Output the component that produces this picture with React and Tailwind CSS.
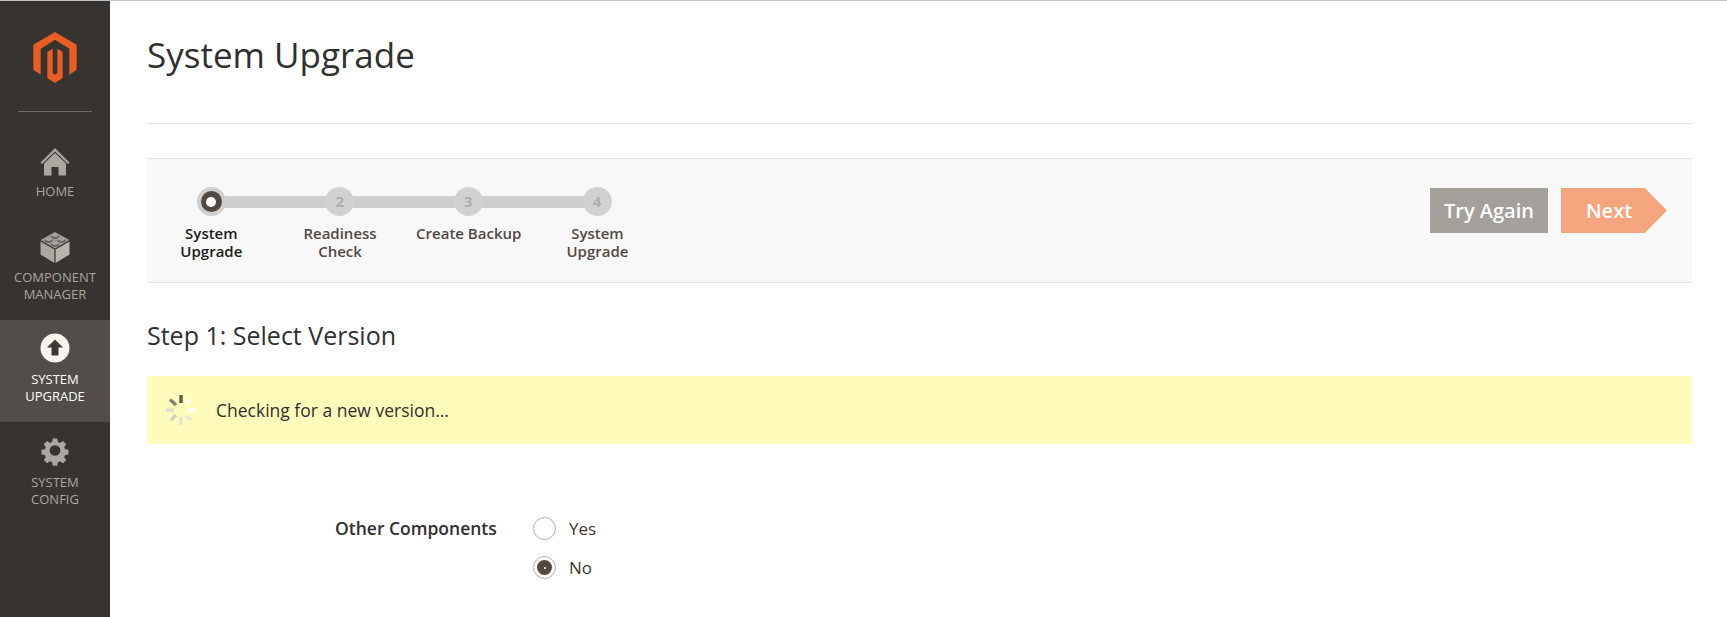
import React from 'react';

const HomeIcon = () => (
  <svg width="40" height="40" viewBox="0 0 40 40" fill="#aaa6a0">
    <path d="M20 6 L34.5 20.5 L33 22 L20 9.5 L7 22 L5.5 20.5 Z" />
    <path d="M20 11 L31 21.5 V33.5 H23.5 V25 H16.5 V33.5 H9 V21.5 Z" />
  </svg>
);

const Stud = ({ cx, cy }) => (
  <>
    <ellipse cx={cx} cy={cy + 1} rx="4" ry="2.2" fill="#66625d" />
    <ellipse cx={cx} cy={cy - 0.4} rx="3.6" ry="1.8" fill="#a5a19b" />
  </>
);

const BrickIcon = () => (
  <svg width="40" height="40" viewBox="0 0 40 40">
    <path d="M20 6 L34.5 14 L20 22.5 L5.5 14 Z" fill="#9a9690" />
    <path d="M5.5 15.5 L19.4 23.5 V37 L5.5 28.5 Z" fill="#aaa6a0" />
    <path d="M34.5 15.5 L20.6 23.5 V37 L34.5 28.5 Z" fill="#b8b5af" />
    <Stud cx={20} cy={9.5} />
    <Stud cx={13.5} cy={13.5} />
    <Stud cx={26.5} cy={13.5} />
    <Stud cx={20} cy={17.5} />
  </svg>
);

const UpgradeIcon = () => (
  <svg width="40" height="40" viewBox="0 0 40 40">
    <circle cx="20" cy="19" r="14.5" fill="#f8f5ee" />
    <path d="M20 10.5 L28 18.5 H23.5 V26.5 H16.5 V18.5 H12 Z" fill="#3d3835" />
  </svg>
);

const GearIcon = () => (
  <svg width="40" height="40" viewBox="0 0 40 40">
    <path
      fill="#aaa6a0"
      fillRule="evenodd"
      d="M17.2 5.5 h5.6 l.7 4.2 l2.7 1.1 l3.5-2.5 l4 4 l-2.5 3.5 l1.1 2.7 l4.2.7 v5.6 l-4.2.7 l-1.1 2.7 l2.5 3.5 l-4 4 l-3.5-2.5 l-2.7 1.1 l-.7 4.2 h-5.6 l-.7-4.2 l-2.7-1.1 l-3.5 2.5 l-4-4 l2.5-3.5 l-1.1-2.7 l-4.2-.7 v-5.6 l4.2-.7 l1.1-2.7 l-2.5-3.5 l4-4 l3.5 2.5 l2.7-1.1 Z M20 13.5 a6.5 6.5 0 1 0 .01 0 Z"
      transform="translate(3.6 3.1) scale(.82)"
    />
  </svg>
);

const Spinner = () => (
  <svg width="40" height="40" viewBox="0 0 40 40" strokeWidth="3.4">
    <line x1="21" y1="5" x2="21" y2="13" stroke="#5f5954" />
    <line x1="31" y1="9.5" x2="26.5" y2="14" stroke="#fffef4" />
    <line x1="36" y1="20" x2="28" y2="20" stroke="#fffef4" />
    <line x1="31" y1="30" x2="26" y2="25.5" stroke="#e9e7d8" />
    <line x1="21" y1="35" x2="21" y2="27" stroke="#e6e4d8" />
    <line x1="11" y1="30" x2="16" y2="25" stroke="#d2d0c5" />
    <line x1="6" y1="20" x2="14" y2="20" stroke="#e1dfd3" />
    <line x1="10" y1="9.5" x2="16" y2="15" stroke="#85807a" />
  </svg>
);

const Logo = () => (
  <svg width="50" height="60" viewBox="0 0 150 180" fill="#eb5e23" className="block">
    <path d="M75 12 L140 50 V125 L118 140 V62 L75 35 L32 62 V140 L10 125 V50 Z" />
    <path d="M52 72 L68 62 V135 L75 140 L82 135 V62 L98 72 V150 L75 165 L52 150 Z" />
  </svg>
);

const navItems = [
  { label: ['HOME'], icon: <HomeIcon />, height: 'h-[84px]', labelGap: 'mt-[1px]' },
  { label: ['COMPONENT', 'MANAGER'], icon: <BrickIcon />, height: 'h-[103px]', labelGap: 'mt-[3px]' },
  { label: ['SYSTEM', 'UPGRADE'], icon: <UpgradeIcon />, height: 'h-[102px]', labelGap: 'mt-[2px]', active: true },
  { label: ['SYSTEM', 'CONFIG'], icon: <GearIcon />, height: 'h-[102px]', labelGap: 'mt-[3px]' },
];

const steps = [
  { num: 1, label: ['System', 'Upgrade'], active: true },
  { num: 2, label: ['Readiness', 'Check'] },
  { num: 3, label: ['Create Backup'] },
  { num: 4, label: ['System', 'Upgrade'] },
];

const Sidebar = () => (
  <div className="w-[110px] shrink-0 bg-[#373330] flex flex-col items-center">
    <div className="pt-[27px]">
      <Logo />
    </div>
    <div className="w-[74px] h-px bg-[#736e69] mt-[23px] mb-[21px]" />
    {navItems.map((item, i) => (
      <div
        key={i}
        className={`w-full flex flex-col items-center pt-[9px] text-[13px] leading-[17px] ${item.height} ${
          item.active ? 'bg-[#524d49] text-white' : 'text-[#aaa6a0]'
        }`}
      >
        {item.icon}
        <div className={`${item.labelGap} text-center`}>
          {item.label.map((line) => (
            <div key={line}>{line}</div>
          ))}
        </div>
      </div>
    ))}
  </div>
);

const Stepper = () => (
  <div className="flex flex-col">
    <div className="flex items-center pl-[49.5px]">
      {steps.map((step, i) => (
        <React.Fragment key={i}>
          {step.active ? (
            <div className="relative z-10 w-[29px] h-[29px] rounded-full bg-[#cfcfcf] flex items-center justify-center shrink-0">
              <div className="w-[21px] h-[21px] rounded-full bg-[#514943] flex items-center justify-center">
                <div className="w-[10px] h-[10px] rounded-full bg-white" />
              </div>
            </div>
          ) : (
            <div className="relative z-10 w-[29px] h-[29px] rounded-full bg-[#d1d1d1] flex items-center justify-center shrink-0 text-[15px] font-bold text-[#adadad]">
              {step.num}
            </div>
          )}
          {i < steps.length - 1 && <div className="w-[103.7px] -mx-[2px] h-[12px] bg-[#cecece] shrink-0" />}
        </React.Fragment>
      ))}
    </div>
    <div className="flex mt-[8px] text-[15px] leading-[18px] font-semibold text-center">
      {steps.map((step, i) => (
        <div key={i} className={`w-[128.7px] ${step.active ? 'text-[#1f1b19]' : 'text-[#514943]'}`}>
          {step.label.map((line) => (
            <div key={line}>{line}</div>
          ))}
        </div>
      ))}
    </div>
  </div>
);

const Radio = ({ label, checked }) => (
  <div className="flex items-center h-[23px]">
    <div className="w-[23px] h-[23px] rounded-full border border-[#adadad] bg-white flex items-center justify-center">
      {checked && (
        <div className="w-[15px] h-[15px] rounded-full bg-[#514943] flex items-center justify-center">
          <div className="w-[2px] h-[2px] rounded-full bg-white" />
        </div>
      )}
    </div>
    <span className="ml-[13px] text-[17px] text-[#41362f]">{label}</span>
  </div>
);

const App = () => (
  <div
    className="w-[1727px] h-[617px] overflow-hidden bg-white flex flex-col border-t border-[#c4c4c4] text-[#303030]"
    style={{ fontFamily: '"Open Sans", sans-serif' }}
  >
    <div className="flex flex-1 min-h-0">
      <Sidebar />
      <div className="flex-1 pl-[37px] pr-[35px]">
        <h1 className="text-[35px] leading-[46px] font-normal text-[#303030] pt-[31px]">System Upgrade</h1>
        <div className="h-px bg-[#e3e3e3] mt-[45px]" />
        <div className="mt-[34px] h-[125px] bg-[#f8f8f8] border-y border-[#e3e3e3] flex justify-between pt-[28px] pr-[25px]">
          <Stepper />
          <div className="flex gap-[13px] pt-[1px] font-semibold text-[20px] text-white">
            <div className="w-[118px] h-[45px] bg-[#a4a09b] flex items-center justify-center">Try Again</div>
            <div
              className="w-[106px] h-[45px] bg-[#f4a57d] flex items-center justify-center pr-[10px]"
              style={{ clipPath: 'polygon(0 0, 79% 0, 100% 50%, 79% 100%, 0 100%)' }}
            >
              Next
            </div>
          </div>
        </div>
        <h2 className="text-[25px] leading-[32px] font-normal text-[#303030] mt-[36px]">Step 1: Select Version</h2>
        <div className="mt-[25px] h-[68px] bg-[#fffbbb] flex items-center pl-[13px] text-[17.5px] text-[#303030]">
          <Spinner />
          <span className="ml-[16px]">Checking for a new version...</span>
        </div>
        <div className="flex mt-[73px] pl-[188px]">
          <div className="w-[198px] text-[17.5px] leading-[23px] font-semibold text-[#303030]">Other Components</div>
          <div className="flex flex-col gap-[16px]">
            <Radio label="Yes" />
            <Radio label="No" checked />
          </div>
        </div>
      </div>
    </div>
  </div>
);

export default App;
